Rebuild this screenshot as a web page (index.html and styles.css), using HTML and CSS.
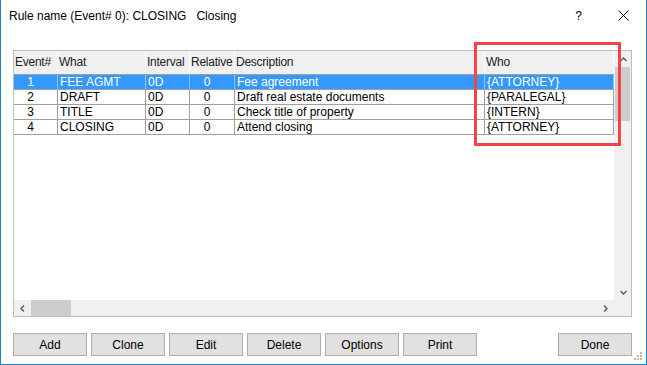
FILE: index.html
```html
<!DOCTYPE html>
<html lang="en">
  <head>
    <meta charset="UTF-8" />
    <title>Rule name</title>
    <link rel="stylesheet" href="styles.css">
  </head>
  <body>
    <div class="dialog">
      <div class="titlebar">
        <span class="title">Rule name (Event# 0): CLOSING   Closing</span>
        <span class="help">?</span>
        <svg class="close" width="11" height="11" viewBox="0 0 11 11">
          <path d="M0.5 0.5 L10.5 10.5 M10.5 0.5 L0.5 10.5" stroke="#000" stroke-width="1" />
        </svg>
      </div>

      <div class="listbox">
        <div class="list-body">
          <div class="list-view">
            <div class="row head">
              <div class="cell">Event#</div>
              <div class="cell">What</div>
              <div class="cell">Interval</div>
              <div class="cell">Relative</div>
              <div class="cell">Description</div>
              <div class="cell">Who</div>
            </div>
            <div class="row selected">
              <div class="cell num">1</div>
              <div class="cell">FEE AGMT</div>
              <div class="cell">0D</div>
              <div class="cell num">0</div>
              <div class="cell">Fee agreement</div>
              <div class="cell">{ATTORNEY}</div>
            </div>
            <div class="row">
              <div class="cell num">2</div>
              <div class="cell">DRAFT</div>
              <div class="cell">0D</div>
              <div class="cell num">0</div>
              <div class="cell">Draft real estate documents</div>
              <div class="cell">{PARALEGAL}</div>
            </div>
            <div class="row">
              <div class="cell num">3</div>
              <div class="cell">TITLE</div>
              <div class="cell">0D</div>
              <div class="cell num">0</div>
              <div class="cell">Check title of property</div>
              <div class="cell">{INTERN}</div>
            </div>
            <div class="row">
              <div class="cell num">4</div>
              <div class="cell">CLOSING</div>
              <div class="cell">0D</div>
              <div class="cell num">0</div>
              <div class="cell">Attend closing</div>
              <div class="cell">{ATTORNEY}</div>
            </div>
          </div>
          <div class="vscroll">
            <div class="arrow">
              <svg width="7" height="5" viewBox="0 0 7 5"><polyline points="0.5,4 3.5,1 6.5,4" fill="none" stroke="#606060" stroke-width="1.5" /></svg>
            </div>
            <div class="vthumb"></div>
            <div class="spacer"></div>
            <div class="arrow">
              <svg width="7" height="5" viewBox="0 0 7 5"><polyline points="0.5,1 3.5,4 6.5,1" fill="none" stroke="#606060" stroke-width="1.5" /></svg>
            </div>
          </div>
        </div>
        <div class="hscroll">
          <div class="arrow">
            <svg width="5" height="7" viewBox="0 0 5 7"><polyline points="4,0.5 1,3.5 4,6.5" fill="none" stroke="#606060" stroke-width="1.5" /></svg>
          </div>
          <div class="hthumb"></div>
          <div class="spacer"></div>
          <div class="arrow">
            <svg width="5" height="7" viewBox="0 0 5 7"><polyline points="1,0.5 4,3.5 1,6.5" fill="none" stroke="#606060" stroke-width="1.5" /></svg>
          </div>
          <div class="corner"></div>
        </div>
      </div>

      <div class="buttons">
        <button class="btn">Add</button>
        <button class="btn">Clone</button>
        <button class="btn">Edit</button>
        <button class="btn">Delete</button>
        <button class="btn">Options</button>
        <button class="btn">Print</button>
        <button class="btn done">Done</button>
      </div>

      <!-- callout drawn over the Who column -->
      <div class="highlight"></div>

      <svg class="grip" width="9" height="9" viewBox="0 0 9 9" fill="#bcbcbc">
        <rect x="6" y="0" width="2" height="2" />
        <rect x="3" y="3" width="2" height="2" />
        <rect x="6" y="3" width="2" height="2" />
        <rect x="0" y="6" width="2" height="2" />
        <rect x="3" y="6" width="2" height="2" />
        <rect x="6" y="6" width="2" height="2" />
      </svg>
    </div>
  </body>
</html>
```

FILE: styles.css
```css
body {
  margin: 0;
  font-family: "Liberation Sans", Arial, sans-serif;
  font-size: 12px;
  color: #000;
  background: #fff;
}
.dialog {
  position: relative;
  width: 647px;
  height: 365px;
  box-sizing: border-box;
  background: #fff;
  border-left: 1px solid #1883d7;
  border-right: 1px solid #1883d7;
  border-bottom: 1px solid #1883d7;
}
.titlebar {
  display: flex;
  align-items: center;
  height: 30px;
}
.title {
  flex: 1;
  padding-left: 8px;
  padding-top: 2px;
  line-height: 28px;
  white-space: pre;
}
.help {
  margin-right: 36px;
  padding-top: 2px;
}
.close {
  margin-right: 17px;
}
.listbox {
  display: flex;
  flex-direction: column;
  height: 267px;
  box-sizing: border-box;
  margin: 20px 14px 0 12px;
  border: 1px solid #bcbcbc;
}
.list-body {
  flex: 1;
  display: flex;
}
.list-view {
  width: 600px;
  background: #fff;
}
.row {
  display: grid;
  grid-template-columns: 44px 88px 44px 45px 250px 129px;
  height: 15px;
  box-sizing: border-box;
  border-bottom: 1px solid #a0a0a0;
}
.row .cell {
  box-sizing: border-box;
  padding-left: 2px;
  border-right: 1px solid #a0a0a0;
  line-height: 14px;
  white-space: nowrap;
  overflow: hidden;
}
.row .cell.num {
  text-align: center;
  padding: 0 10px 0 0;
}
.row.head {
  height: 24px;
  background: #f0f0f0;
  color: #222;
}
.row.head .cell {
  padding-left: 1px;
  line-height: 23px;
  letter-spacing: -0.25px;
  border-right-color: #fdfdfd;
}
.row.selected {
  background: #3399ff;
  color: #fff;
}
.row.selected .cell {
  border-right-color: #8cc4fb;
}
.vscroll {
  width: 17px;
  display: flex;
  flex-direction: column;
  background: #f0f0f0;
}
.vscroll .arrow {
  height: 16px;
  display: flex;
  align-items: center;
  justify-content: center;
  padding-left: 2px;
}
.vthumb {
  height: 54px;
  margin: 0 1px;
  background: #cdcdcd;
}
.spacer {
  flex: 1;
}
.hscroll {
  height: 16px;
  display: flex;
  background: #f0f0f0;
}
.hscroll .arrow {
  width: 17px;
  display: flex;
  align-items: center;
  justify-content: center;
}
.hthumb {
  width: 40px;
  background: #cdcdcd;
}
.corner {
  width: 17px;
}
.buttons {
  display: flex;
  gap: 4px;
  margin: 16px 14px 0 12px;
}
.btn {
  width: 74px;
  height: 23px;
  padding: 0;
  font-family: "Liberation Sans", Arial, sans-serif;
  font-size: 12px;
  color: #000;
  background: #e1e1e1;
  border: 1px solid #adadad;
  border-radius: 0;
}
.btn.done {
  margin-left: auto;
}
.highlight {
  position: absolute;
  left: 473px;
  top: 42px;
  width: 147px;
  height: 104px;
  box-sizing: border-box;
  border: 3px solid #f24444;
}
.grip {
  position: absolute;
  left: 633px;
  top: 352px;
}
```
